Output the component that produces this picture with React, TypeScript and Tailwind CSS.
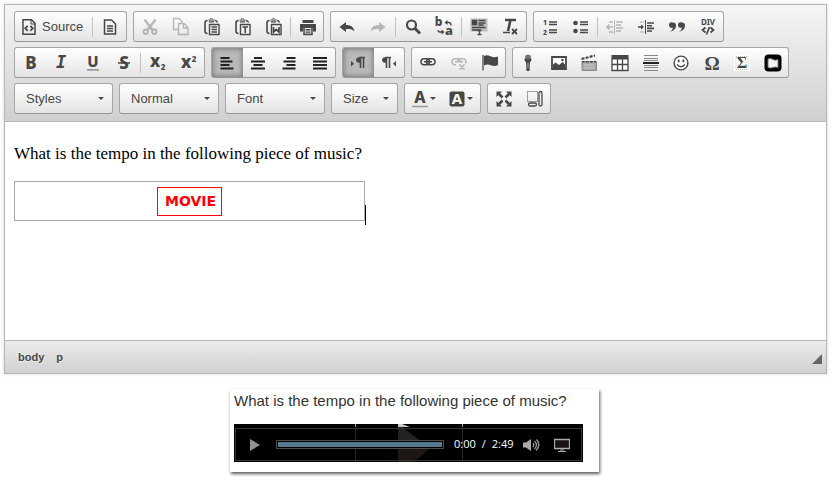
import type { ReactNode } from "react";

const K = "#474747";

function Icon({ children, faded }: { children: ReactNode; faded?: boolean }) {
  return (
    <svg viewBox="0 0 16 16" className={`h-4 w-4 overflow-visible ${faded ? "opacity-35" : ""}`} fill="none" stroke={K} strokeWidth="1.5" aria-hidden="true">
      {children}
    </svg>
  );
}

function Letter({ children, size = 16, x = 8, y = 14, font = "Noto Sans", weight = 800, fill = K, italic }: { children: string; size?: number; x?: number; y?: number; font?: string; weight?: number; fill?: string; italic?: boolean }) {
  return (
    <text x={x} y={y} fontSize={size} fontFamily={`"${font}", sans-serif`} fontWeight={weight} fontStyle={italic ? "italic" : "normal"} textAnchor="middle" fill={fill} stroke="none">
      {children}
    </text>
  );
}

function Btn({ label, on, children }: { label: string; on?: boolean; children: ReactNode }) {
  return (
    <button
      type="button"
      aria-label={label}
      title={label}
      aria-pressed={on}
      className={`flex h-full flex-1 items-center justify-center ${on ? "bg-[#b9b9b9] shadow-[inset_0_0_5px_1px_rgba(0,0,0,0.35)]" : ""}`}
    >
      {children}
    </button>
  );
}

function Sep() {
  return <span className="mx-px h-5 w-px shrink-0 bg-[#c0c0c0]" />;
}

function Group({ width, children }: { width: string; children: ReactNode }) {
  return (
    <div className={`flex h-[31px] shrink-0 items-center overflow-hidden rounded-[3px] border border-[#a6a6a6] border-b-[#979797] bg-linear-to-b from-white to-[#e4e4e4] ${width}`}>
      {children}
    </div>
  );
}

function Caret() {
  return <span className="pointer-events-none h-0 w-0 shrink-0 border-x-[3px] border-t-[3px] border-x-transparent border-t-[#474747]" />;
}

function Combo({ label, width }: { label: string; width: string }) {
  return (
    <Group width={width}>
      <label className="grid h-full w-full grid-cols-1 items-center">
        <select aria-label={label} className="col-start-1 row-start-1 h-full w-full appearance-none bg-transparent pt-px pl-[11px] text-[13px] text-[#474747] outline-none">
          <option>{label}</option>
        </select>
        <span className="pointer-events-none col-start-1 row-start-1 flex justify-end pr-2">
          <Caret />
        </span>
      </label>
    </Group>
  );
}

function Clipboard({ children }: { children: ReactNode }) {
  return (
    <Icon>
      <path d="M3.500 1.500Q1 1.500 1 4v8q0 2.500 2.500 2.500M11 1.500q2 0 2.500 2" strokeWidth="1.600" />
      <path d="M4.500 0h1.500v-1h3v1h1.500v3h-6z" fill="#999" stroke="none" />
      <path d="M5 3h5" strokeWidth="1.200" />
      <path d="M5.500 5.500h9.500v10H5.500z" fill="#f4f4f4" strokeWidth="1.400" />
      {children}
    </Icon>
  );
}

function RowOne() {
  return (
    <div className="flex gap-[6px]">
      <Group width="w-[113px]">
        <button type="button" className="flex h-full items-center gap-[5px] pt-px pr-2 pl-[6px] text-[13px] text-[#474747]">
          <Icon>
            <path d="M2 .8h8.500l3.500 3.500v10.900H2z" strokeWidth="1.500" />
            <path d="M10 1v4h4" strokeWidth="1" />
            <path d="M6.700 6.800L4.200 9.300l2.500 2.500M9.300 6.800l2.500 2.500-2.500 2.500" strokeWidth="1.700" />
          </Icon>
          Source
        </button>
        <Sep />
        <Btn label="Templates">
          <Icon>
            <path d="M2.500 1h7l4 4v10h-11z" />
            <path d="M5 7h6M5 9.500h6M5 12h6" strokeWidth="1.300" />
          </Icon>
        </Btn>
      </Group>
      <Group width="w-[191px]">
        <Btn label="Cut">
          <Icon faded>
            <path d="M2.500 0.500L10.500 11M13.500 0.500L5.500 11" strokeWidth="2.400" />
            <circle cx="3.700" cy="12.700" r="2.200" strokeWidth="1.800" />
            <circle cx="12.300" cy="12.700" r="2.200" strokeWidth="1.800" />
          </Icon>
        </Btn>
        <Btn label="Copy">
          <Icon faded>
            <path d="M5 10.500H.5V-.5H6L9 2.500V4" strokeWidth="1.300" />
            <path d="M5.500 4.500h5.500l4 4v7H5.500zM10.500 4.500v4.500h4.500" strokeWidth="1.300" />
          </Icon>
        </Btn>
        <Btn label="Paste">
          <Clipboard><path d="M7.500 8h5.500M7.500 10.500h5.500M7.500 13h5.500" strokeWidth="1.300" /></Clipboard>
        </Btn>
        <Btn label="Paste as plain text">
          <Clipboard><path d="M7.500 8h5.500M10.250 8v6" strokeWidth="1.600" /></Clipboard>
        </Btn>
        <Btn label="Paste from Word">
          <Clipboard><path d="M7.500 8v5l2.750-2.500L13 13V8" strokeWidth="1.700" /></Clipboard>
        </Btn>
        <Sep />
        <Btn label="Print">
          <Icon>
            <path d="M2.500 1h11v3h-11z" fill={K} stroke="none" />
            <path d="M0 5h16v7.500h-3V9H3v3.500H0z" fill={K} stroke="none" />
            <path d="M4 9v6.500h8V9" />
            <path d="M5.500 10.500h5M5.500 12h5M5.500 13.800h5" strokeWidth="1" />
          </Icon>
        </Btn>
      </Group>
      <Group width="w-[197px]">
        <Btn label="Undo">
          <Icon><path d="M.5 8L7 3v3c5 0 7.500 2 8.500 6.500C13 10 11 10 7 10v3z" fill={K} stroke="none" /></Icon>
        </Btn>
        <Btn label="Redo">
          <Icon faded><path d="M15.500 8L9 3v3C4 6 1.500 8 .5 12.500 3 10 5 10 9 10v3z" fill={K} stroke="none" /></Icon>
        </Btn>
        <Sep />
        <Btn label="Find">
          <Icon>
            <circle cx="6.500" cy="6" r="4.500" strokeWidth="2.200" />
            <path d="M10 9.500l5 5" strokeWidth="3" />
          </Icon>
        </Btn>
        <Btn label="Replace">
          <Icon>
            <Letter x={2.500} y={7} size={12}>b</Letter>
            <Letter x={13} y={16} size={13}>a</Letter>
            <path d="M10.500 3.500H13q2 0 2 3" strokeWidth="1.300" />
            <path d="M8.500 3.500L11.500 1v5zM8.500 13L5.500 10.500v5z" fill={K} stroke="none" />
            <path d="M6 13H4q-2 0-2-2" strokeWidth="1.300" />
          </Icon>
        </Btn>
        <Sep />
        <Btn label="Select All">
          <Icon>
            <path d="M-.5-.5h17v13h-17z" fill="#bcbcbc" stroke="none" />
            <path d="M1.500 1.500h4v4h-4z" fill={K} />
            <path d="M7.500 1.500h7M7.500 4h7M7.500 6h5M1 8.500h13.500M1 11h9M6.500 15.500h4M8.500 11.500v4M6.500 11.500h4" strokeWidth="1.300" />
          </Icon>
        </Btn>
        <Btn label="Remove Format">
          <Icon>
            <path d="M3 1h11M8.500 1L6 12" strokeWidth="2.600" />
            <path d="M1 13.500h7" strokeWidth="1.400" />
            <path d="M10 10l5 5M15 10l-5 5" strokeWidth="1.800" />
          </Icon>
        </Btn>
      </Group>
      <Group width="w-[191px]">
        <Btn label="Numbered List">
          <Icon>
            <Letter x={3} y={6} size={7}>1</Letter>
            <Letter x={3} y={16} size={7}>2</Letter>
            <path d="M7 3h8M7 5.500h8M7 11h8M7 13.500h8" strokeWidth="1.400" />
          </Icon>
        </Btn>
        <Btn label="Bulleted List">
          <Icon>
            <circle cx="2.500" cy="4" r="2.300" fill={K} stroke="none" />
            <circle cx="2.500" cy="12" r="2.300" fill={K} stroke="none" />
            <path d="M7 3h8M7 5.500h8M7 11h8M7 13.500h8" strokeWidth="1.400" />
          </Icon>
        </Btn>
        <Sep />
        <Btn label="Decrease Indent">
          <Icon faded>
            <path d="M6 8H0M2.500 5.500L0 8l2.500 2.500" />
            <path d="M7.500 1v14" strokeWidth="1" />
            <path d="M9 3h7M9 6h5M9 9h7M9 12h5M2 3h4M2 13h4" strokeWidth="1.300" />
          </Icon>
        </Btn>
        <Btn label="Increase Indent">
          <Icon>
            <path d="M0 8h5" />
            <path d="M3 5.500L6 8l-3 2.500z" fill={K} stroke="none" />
            <path d="M7.500 1v14" strokeWidth="1" />
            <path d="M9 4h7M9 6.700h5M9 9.400h7M9 12h5" strokeWidth="1.600" />
            <path d="M2 3h4M2 13h4" stroke="#aaa" strokeWidth="1" />
          </Icon>
        </Btn>
        <Btn label="Block Quote">
          <Icon>
            <path d="M4 3.500a2.800 2.800 0 1 0 0 5q0 2-3 4.500Q7 11 7 6.500 7 3.700 4 3.500zM13 3.500a2.800 2.800 0 1 0 0 5q0 2-3 4.500 6-2 6-6.500 0-2.800-3-3z" fill={K} stroke="none" />
          </Icon>
        </Btn>
        <Btn label="Create Div Container">
          <Icon>
            <Letter size={8} y={6} weight={700}>DIV</Letter>
            <path d="M5.500 8.500L2.500 11l3 2.500M10.500 8.500l3 2.500-3 2.500M9.500 8l-3 7.500" strokeWidth="1.700" />
          </Icon>
        </Btn>
      </Group>
    </div>
  );
}

function RowTwo() {
  return (
    <div className="flex gap-[6px]">
      <Group width="w-[191px]">
        <Btn label="Bold"><Icon><Letter size={17}>B</Letter></Icon></Btn>
        <Btn label="Italic"><Icon><Letter size={17} y={13} x={7} font="DejaVu Sans Mono" italic>I</Letter></Icon></Btn>
        <Btn label="Underline">
          <Icon>
            <Letter size={15} y={12}>U</Letter>
            <path d="M2 14.800h12" stroke="#777" strokeWidth="1.300" />
          </Icon>
        </Btn>
        <Btn label="Strike Through">
          <Icon>
            <Letter size={17}>S</Letter>
            <path d="M2 8h12" strokeWidth="1.500" />
          </Icon>
        </Btn>
        <Sep />
        <Btn label="Subscript">
          <Icon>
            <Letter size={17} x={5} y={12}>x</Letter>
            <Letter size={8} x={13} y={15}>2</Letter>
          </Icon>
        </Btn>
        <Btn label="Superscript">
          <Icon>
            <Letter size={17} x={5} y={13}>x</Letter>
            <Letter size={8} x={13} y={7}>2</Letter>
          </Icon>
        </Btn>
      </Group>
      <Group width="w-[125px]">
        <Btn label="Align Left" on><Icon><path d="M1.500 3h9M1.500 6.500h12M1.500 10h9M1.500 13.500h13" stroke="#222" strokeWidth="2" /></Icon></Btn>
        <Btn label="Center"><Icon><path d="M4 3h8M1 6.500h14M3.500 10h9M1 13.500h14" stroke="#222" strokeWidth="2" /></Icon></Btn>
        <Btn label="Align Right"><Icon><path d="M5.500 3h9M2.500 6.500h12M5.500 10h9M1.500 13.500h13" stroke="#222" strokeWidth="2" /></Icon></Btn>
        <Btn label="Justify"><Icon><path d="M1 3h14M1 6.500h14M1 10h14M1 13.500h14" stroke="#222" strokeWidth="2" /></Icon></Btn>
      </Group>
      <Group width="w-[63px]">
        <Btn label="Text direction from left to right" on>
          <Icon>
            <path d="M1 6l3 2.800L1 11.500z" fill={K} stroke="none" />
            <path d="M15 2.500H9.500M10.500 3v10M13.500 3v10" strokeWidth="1.600" />
            <path d="M11 2q-5 0-5 3t5 3z" fill={K} stroke="none" />
          </Icon>
        </Btn>
        <Btn label="Text direction from right to left">
          <Icon>
            <path d="M15 6l-3 2.800 3 2.700z" fill={K} stroke="none" />
            <path d="M10 2.500H4.500M5.500 3v10M8.500 3v10" strokeWidth="1.600" />
            <path d="M6 2Q1 2 1 5t5 3z" fill={K} stroke="none" />
          </Icon>
        </Btn>
      </Group>
      <Group width="w-[95px]">
        <Btn label="Link">
          <Icon>
            <rect x="1" y="3.800" width="8.500" height="6" rx="3" />
            <rect x="6.500" y="3.800" width="8.500" height="6" rx="3" />
            <path d="M4 6.800h8" strokeWidth="1.600" />
          </Icon>
        </Btn>
        <Btn label="Unlink">
          <Icon faded>
            <path d="M5 9.800H4a3 3 0 0 1 0-6h2.500a3 3 0 0 1 3 3M6.500 6.800a3 3 0 0 1 3-3H12a3 3 0 0 1 2.500 4.700M4 6.800h8M8.500 9.500l5 5M13.500 9.500l-5 5" />
          </Icon>
        </Btn>
        <Btn label="Anchor">
          <Icon>
            <path d="M1 0v15.500" stroke="#777" strokeWidth="1.800" />
            <path d="M2 1q3-1.500 6.500.2t7.500.3v8.500q-3.500 1.700-7 .2T2 10.500z" fill={K} stroke="none" />
          </Icon>
        </Btn>
      </Group>
      <Group width="w-[277px]">
        <Btn label="Audio recorder">
          <Icon>
            <circle cx="8" cy="2.500" r="3" fill="#777" stroke="none" />
            <path d="M4.500 4.500h7M5 6h6" strokeWidth="1.400" />
            <path d="M6 6h4l-.5 10h-3z" fill={K} stroke="none" />
            <path d="M8 8v5" stroke="#aaa" strokeWidth="1" />
          </Icon>
        </Btn>
        <Btn label="Image">
          <Icon>
            <path d="M1 2h14v12H1z" fill="#fff" strokeWidth="1.800" />
            <path d="M2 12V9.500l2.500-2L8 10l3.500-3L14 9.500V13H2z" fill={K} stroke="none" />
            <circle cx="11.500" cy="5" r="1.200" fill={K} stroke="none" />
          </Icon>
        </Btn>
        <Btn label="Movie">
          <Icon>
            <path d="M1 6.500h14.500v9H1z" fill="#aaa" stroke="#888" strokeWidth="1" />
            <path d="M.5 4L14 .5" strokeWidth="2.200" strokeDasharray="3 1.200" />
            <path d="M1 6.800h14" strokeWidth="1.600" strokeDasharray="2.500 1.500" />
            <path d="M3 10h10M3 13h10" stroke="#ccc" strokeWidth="1" />
          </Icon>
        </Btn>
        <Btn label="Table">
          <Icon>
            <path d="M0 .5h16v15H0z" fill="#fff" stroke="none" />
            <path d="M-.5 0h17v4.500h-17z" fill={K} stroke="none" />
            <path d="M0 4v11.500h16V4M5.500 4v11.500M10.500 4v11.500M0 9.500h16" strokeWidth="1.300" />
          </Icon>
        </Btn>
        <Btn label="Horizontal Line">
          <Icon>
            <path d="M1 .5h14M1 3.500h14M1 5.500h14M1 10.500h14M1 12.500h14M1 15.500h14" stroke="#888" strokeWidth="1" />
            <path d="M0 8h16" stroke="#222" strokeWidth="2" />
          </Icon>
        </Btn>
        <Btn label="Smiley">
          <Icon>
            <circle cx="8" cy="8" r="6.900" strokeWidth="1.400" fill="#fff" />
            <ellipse cx="5.700" cy="6" rx="1" ry="1.400" fill={K} stroke="none" />
            <ellipse cx="10.300" cy="6" rx="1" ry="1.400" fill={K} stroke="none" />
            <path d="M4 9.500q4 4.500 8 0" strokeWidth="1.300" />
          </Icon>
        </Btn>
        <Btn label="Special Character"><Icon><Letter size={19} y={15} font="Liberation Serif">Ω</Letter></Icon></Btn>
        <Btn label="Math">
          <Icon>
            <path d="M0 0h16v16H0z" fill="#fff" stroke="none" />
            <path d="M2 1.500h12v13H2z" stroke="#bbb" strokeWidth="1" strokeDasharray="1 1" />
            <Letter size={16} y={13} font="Liberation Serif" weight={700}>Σ</Letter>
          </Icon>
        </Btn>
        <Btn label="Embed media">
          <Icon>
            <rect x="-.5" y="-.5" width="17" height="17" rx="4" fill="#000" stroke="none" />
            <path d="M3 4q2.500-1 5 0.500t5 0v8q-2.500-1-5 0t-5 0z" fill="#f4f4f4" stroke="#777" strokeWidth="1" />
          </Icon>
        </Btn>
      </Group>
    </div>
  );
}

function RowThree() {
  return (
    <div className="flex gap-[6px]">
      <Combo label="Styles" width="w-[99px]" />
      <Combo label="Normal" width="w-[100px]" />
      <Combo label="Font" width="w-[100px]" />
      <Combo label="Size" width="w-[67px]" />
      <Group width="w-[77px]">
        <Btn label="Text Color">
          <span className="flex items-center gap-[2px]">
            <Icon>
              <Letter size={16} y={12}>A</Letter>
              <path d="M0 15.500h16" stroke="#999" />
            </Icon>
            <Caret />
          </span>
        </Btn>
        <Btn label="Background Color">
          <span className="flex items-center gap-[2px]">
            <Icon>
              <rect x=".5" y=".5" width="15" height="15" rx="2" fill={K} stroke="none" />
              <Letter size={15} y={13} fill="#fff" weight={700}>A</Letter>
            </Icon>
            <Caret />
          </span>
        </Btn>
      </Group>
      <Group width="w-[64px]">
        <Btn label="Maximize">
          <Icon>
            <path d="M.5.5H6L.5 6zM15.500.5V6L10 .5zM.5 15.500V10L6 15.500zM15.500 15.500H10l5.500-5.500z" fill={K} stroke="none" />
            <path d="M2 2l4.500 4.500M14 2L9.500 6.500M2 14l4.500-4.500M14 14L9.500 9.500" strokeWidth="2.600" />
          </Icon>
        </Btn>
        <Btn label="Show Blocks">
          <Icon>
            <path d="M.5 10.500v-10h10v10z" strokeWidth="1" strokeDasharray="1 1" />
            <rect x="12" y="0.500" width="3" height="14.500" rx="1.500" strokeWidth="1.300" />
            <rect x="1.500" y="12" width="8" height="3" rx="1.500" strokeWidth="1.300" />
          </Icon>
        </Btn>
      </Group>
    </div>
  );
}

function Player() {
  return (
    <div className="relative w-[349px] bg-black px-px pt-[4px] pb-px">
      <svg viewBox="0 0 349 38" className="absolute inset-0 h-full w-full" aria-hidden="true">
        <path d="M164 0l32 24-16 14h-16z" fill="#242224" />
        <path d="M164 0h4l8 3h-12z" fill="#ccc" />
        <path d="M121.500 0v3M228.500 0v3" stroke="#aaa" />
        <path d="M121.500 4v34M228.500 4v34" stroke="#252525" />
        <path d="M164 24h32l-16 14h-16z" fill="#1c1615" />
      </svg>
      <div className="relative flex h-[33px] items-center border border-[#363636] text-white">
        <button type="button" aria-label="Play" className="ml-[14px]">
          <svg viewBox="0 0 10 12" className="h-3 w-[10px]" fill="#929292"><path d="M0 0l10 6-10 6z" /></svg>
        </button>
        <input
          type="range"
          aria-label="Position"
          defaultValue={0}
          className="ml-4 h-[9px] w-[168px] appearance-none border border-[#4b4b4b] bg-[#55788f] shadow-[inset_0_0_0_1px_#000] [&::-webkit-slider-thumb]:h-0 [&::-webkit-slider-thumb]:w-0 [&::-webkit-slider-thumb]:appearance-none"
        />
        <span className="ml-[10px] flex gap-[6px] font-['Open_Sans',sans-serif] text-[11px]">
          <span>0:00</span>
          <span>/</span>
          <span>2:49</span>
        </span>
        <button type="button" aria-label="Mute" className="ml-[9px]">
          <svg viewBox="0 0 17 14" className="h-[14px] w-[17px]" fill="none" stroke="#999" strokeWidth="1.300">
            <path d="M0 4.500h3L8 1v12L3 9.500H0z" fill="#aaa" stroke="none" />
            <path d="M10 5q1.500 2 0 4M11.500 3q4 4 0 8M13.500 1.500q5 5.500-.5 11" />
          </svg>
        </button>
        <button type="button" aria-label="Full screen" className="ml-[14px]">
          <svg viewBox="0 0 16 14" className="h-[14px] w-4" fill="#181213" stroke="#aaa">
            <path d="M.5 1.500h15v9H.5z" strokeWidth="1.300" />
            <path d="M6 12h4M4 13.500h8" />
          </svg>
        </button>
      </div>
    </div>
  );
}

export default function App() {
  return (
    <main className="bg-white pt-1 pr-[6px] pb-3 pl-1 font-['Liberation_Sans',Arial,sans-serif]">
      <section className="border border-[#b6b6b6] shadow-[0_0_4px_rgba(0,0,0,0.15)]">
        <div className="flex flex-col gap-[5px] border-b border-[#b6b6b6] bg-linear-to-b from-[#f5f5f5] to-[#cfd1cf] px-[9px] pt-[6px] pb-[7px]">
          <RowOne />
          <RowTwo />
          <RowThree />
        </div>
        <div className="h-[218px] bg-white px-[9px] pt-[22px] font-['Liberation_Serif',serif] text-[17px] leading-5 text-black">
          <p>What is the tempo in the following piece of music?</p>
          <div className="mt-[17px] flex items-end">
            <div className="flex h-10 w-[351px] items-center justify-center border border-[#a9a9a9]">
              <span className="flex h-[29px] w-[65px] items-center justify-center border border-[#fa0505] pl-[2px] font-['DejaVu_Sans',sans-serif] text-[14px] font-bold text-[#ff0000]">MOVIE</span>
            </div>
            <span className="-mb-1 h-5 w-px bg-black" />
          </div>
        </div>
        <footer className="flex h-[33px] items-center justify-between border-t border-[#b6b6b6] bg-linear-to-b from-[#ebebeb] to-[#cfd1cf] pr-1 pl-[13px] text-[11px] font-bold text-[#484848] [text-shadow:0_1px_0_rgba(255,255,255,0.5)]">
          <nav aria-label="Elements path" className="flex gap-3">
            <a href="#body">body</a>
            <a href="#p">p</a>
          </nav>
          <span className="mt-1 h-0 w-0 border-b-[10px] border-l-[10px] border-b-[#666] border-l-transparent" />
        </footer>
      </section>
      <div className="mt-[15px] flex justify-center pr-[2px]">
        <section className="w-[369px] bg-white px-1 pt-[2px] pb-[10px] shadow-[1px_2px_3px_rgba(0,0,0,0.65)]">
          <p className="mb-[13px] text-[15px] leading-5 whitespace-nowrap text-[#333]">What is the tempo in the following piece of music?</p>
          <Player />
        </section>
      </div>
    </main>
  );
}
